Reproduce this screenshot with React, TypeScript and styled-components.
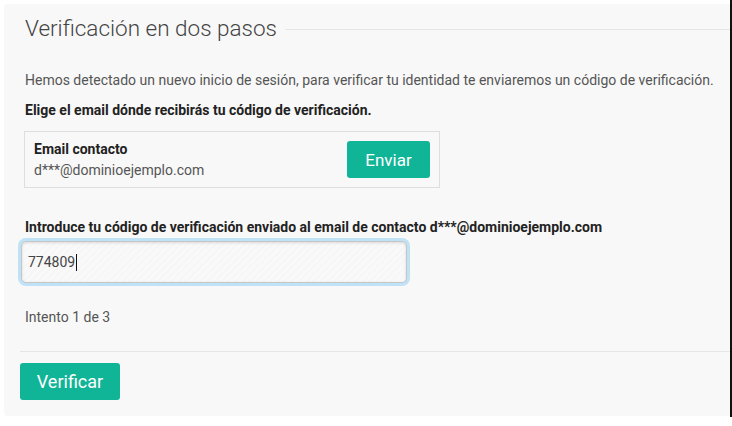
import React from "react"
import styled, { createGlobalStyle } from "styled-components"

const GlobalStyle = createGlobalStyle`
    * { box-sizing: border-box; }
    html, body {
        margin: 0;
        padding: 0;
        background: #ffffff;
        font-family: Roboto, "Liberation Sans", Arial, sans-serif;
    }
`

const Frame = styled.div`
    width: 732px;
    height: 417px;
    padding: 4px 0 1px 4px;
    border-right: 2px solid #111111;
`

const Panel = styled.section`
    height: 100%;
    background-color: #f8f8f8;
    border-radius: 4px 0 0 4px;
    padding: 9px 0 0 16px;
    color: #555555;
`

const Header = styled.div`
    display: flex;
    align-items: center;
    gap: 8px;
    padding-left: 5px;
`

const Title = styled.h1`
    margin: 0;
    font-weight: 300;
    font-size: 22.5px;
    line-height: 30px;
    color: #444444;
    white-space: nowrap;
`

const Rule = styled.div<{ $offset?: number }>`
    flex: 1;
    height: 1px;
    background-color: #e6e6e6;
    margin-top: ${({ $offset }) => $offset ?? 0}px;
`

const Body = styled.div`
    padding: 28px 0 0 5px;
`

const Text = styled.p<{ $bold?: boolean }>`
    margin: 0;
    font-size: 14px;
    line-height: 18px;
    font-weight: ${({ $bold }) => ($bold ? 700 : 400)};
    color: ${({ $bold }) => ($bold ? "#222222" : "#555555")};
`

const EmailBox = styled.div`
    display: flex;
    align-items: center;
    justify-content: space-between;
    width: 416px;
    height: 57px;
    margin: 12px 0 0 -1px;
    padding: 0 9px 0 9px;
    border: 1px solid #dedede;
`

const EmailInfo = styled.div`
    display: flex;
    flex-direction: column;
    gap: 3px;
`

const Button = styled.button<{ $size?: "md" | "lg" }>`
    border: none;
    border-radius: 3px;
    background-color: #10b496;
    color: #ffffff;
    font-family: Roboto, "Liberation Sans", Arial, sans-serif;
    font-size: ${({ $size }) => ($size === "lg" ? "18px" : "17px")};
    padding: 0;
    width: ${({ $size }) => ($size === "lg" ? "100px" : "83px")};
    height: 37px;
    cursor: pointer;
`

const Field = styled.div`
    margin-top: 30px;
`

const CodeInput = styled.div`
    display: flex;
    align-items: center;
    width: 386px;
    height: 42px;
    margin: 5px 0 0 -4px;
    padding-left: 6px;
    border-radius: 5px;
    border: 1px solid #c6c6c6;
    box-shadow: 0 0 0 3px #bfe2f6, inset 0 1px 3px rgba(0, 0, 0, 0.12);
    background-color: #f9f9f9;
    background-image: repeating-linear-gradient(
        -45deg,
        rgba(0, 0, 0, 0.01) 0px,
        rgba(0, 0, 0, 0.01) 2px,
        transparent 2px,
        transparent 5px
    );
    font-size: 14px;
    color: #444444;
`

const Caret = styled.span`
    display: inline-block;
    width: 1px;
    height: 17px;
    margin-left: 1px;
    background-color: #111111;
`

const Attempts = styled(Text)`
    margin-top: 25px;
`

const Footer = styled.div`
    padding-top: 25px;
`

const Actions = styled.div`
    padding-top: 11px;
`

export default function App() {
    return (
        <>
            <GlobalStyle />
            <Frame>
                <Panel>
                    <Header>
                        <Title>Verificación en dos pasos</Title>
                        <Rule $offset={2} />
                    </Header>
                    <Body>
                        <Text>
                            Hemos detectado un nuevo inicio de sesión, para verificar tu identidad te enviaremos un código de verificación.
                        </Text>
                        <Text $bold style={{ marginTop: 12 }}>
                            Elige el email dónde recibirás tu código de verificación.
                        </Text>
                        <EmailBox>
                            <EmailInfo>
                                <Text $bold>Email contacto</Text>
                                <Text>d***@dominioejemplo.com</Text>
                            </EmailInfo>
                            <Button>Enviar</Button>
                        </EmailBox>
                        <Field>
                            <Text $bold>
                                Introduce tu código de verificación enviado al email de contacto d***@dominioejemplo.com
                            </Text>
                            <CodeInput>
                                774809<Caret />
                            </CodeInput>
                        </Field>
                        <Attempts>Intento 1 de 3</Attempts>
                    </Body>
                    <Footer>
                        <Rule />
                        <Actions>
                            <Button $size="lg">Verificar</Button>
                        </Actions>
                    </Footer>
                </Panel>
            </Frame>
        </>
    )
}
